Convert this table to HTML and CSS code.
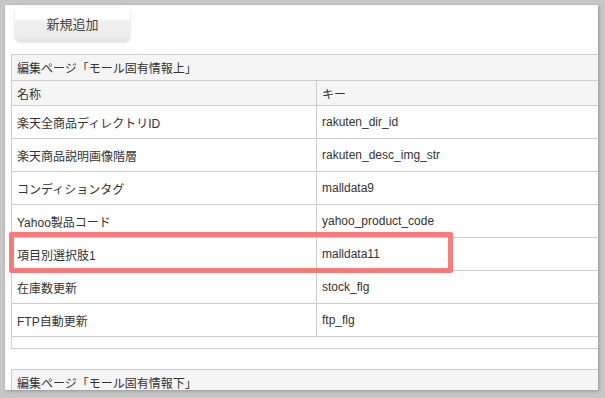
FILE: index.html
```html
<!DOCTYPE html>
<html lang="ja">
<head>
  <meta charset="UTF-8" />
  <title>モール固有情報</title>
  <link rel="stylesheet" href="styles.css">
</head>
<body>
  <div class="frame">
    <button class="add-btn">新規追加</button>

    <table class="item-table">
      <tr class="caption-row"><td colspan="2">編集ページ「モール固有情報上」</td></tr>
      <tr class="head-row"><td class="col-name">名称</td><td>キー</td></tr>
      <tr><td>楽天全商品ディレクトリID</td><td>rakuten_dir_id</td></tr>
      <tr><td>楽天商品説明画像階層</td><td>rakuten_desc_img_str</td></tr>
      <tr><td>コンディションタグ</td><td>malldata9</td></tr>
      <tr><td>Yahoo製品コード</td><td>yahoo_product_code</td></tr>
      <tr><td>項目別選択肢1</td><td>malldata11</td></tr>
      <tr><td>在庫数更新</td><td>stock_flg</td></tr>
      <tr><td>FTP自動更新</td><td>ftp_flg</td></tr>
      <tr class="foot-row"><td colspan="2"></td></tr>
    </table>

    <table class="item-table second">
      <tr class="caption-row"><td colspan="2">編集ページ「モール固有情報下」</td></tr>
    </table>

    <div class="highlight"></div>
  </div>
</body>
</html>
```

FILE: styles.css
```css
* {
  box-sizing: border-box;
  margin: 0;
  padding: 0;
}

body {
  background: #c6c6c6;
  font-family: 'Liberation Sans', 'Noto Sans CJK JP', sans-serif;
  font-size: 12px;
  color: #333;
  padding: 5px 7px 0 5px;
  height: 398px;
  overflow: hidden;
}

.frame {
  position: relative;
  background: #fff;
  height: 385px;
  overflow: hidden;
  padding-left: 6px;
  box-shadow: 1px 1px 3px rgba(0, 0, 0, 0.25), inset 0 0 2px rgba(0, 0, 0, 0.08);
}

.add-btn {
  display: block;
  margin: 3px 0 0 4px;
  width: 115px;
  height: 33px;
  border: none;
  border-radius: 5px;
  background: linear-gradient(to bottom, #fff 0%, #fff 35%, #f1f1f1 36%, #ececec 85%, #e4e4e4 100%);
  box-shadow: 0 1px 3px rgba(0, 0, 0, 0.18);
  font-family: 'Noto Sans CJK JP', sans-serif;
  font-size: 13px;
  color: #444;
  padding-bottom: 2px;
}

.item-table {
  width: 588px;
  margin-top: 13px;
  border-collapse: collapse;
}

.item-table td {
  border: 1px solid #cdcdcd;
  padding: 0 5px;
  height: 33px;
  vertical-align: middle;
  white-space: nowrap;
}

.item-table .col-name {
  width: 305px;
}

.caption-row td {
  background: #f5f5f5;
  height: 26px;
}

.head-row td {
  background: #f5f5f5;
  height: 25px;
}

.foot-row td {
  height: 12px;
}

.item-table.second {
  margin-top: 20px;
}

.highlight {
  position: absolute;
  left: 4px;
  top: 227px;
  width: 444px;
  height: 41px;
  border: 5px solid rgba(250, 100, 100, 0.85);
  border-radius: 2px;
}
```
